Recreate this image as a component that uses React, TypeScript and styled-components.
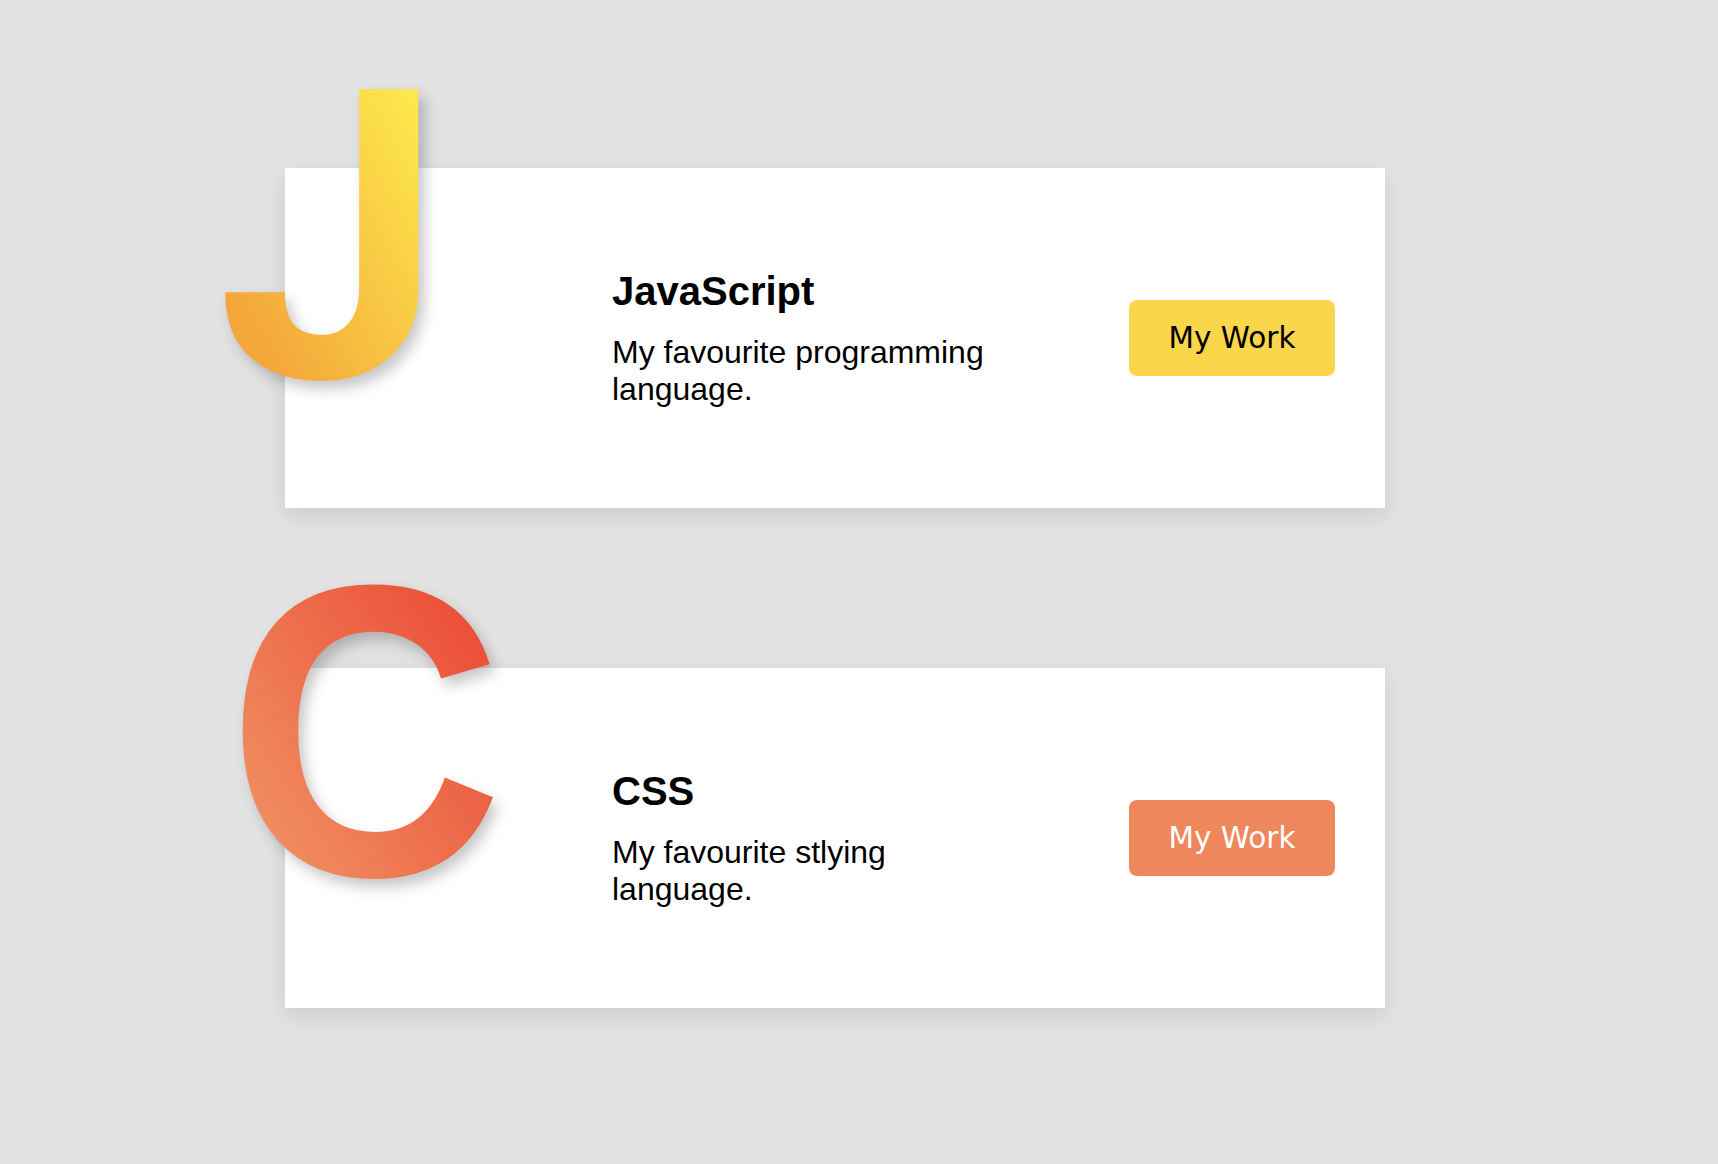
import React from "react";
import styled, { createGlobalStyle } from "styled-components";

const Global = createGlobalStyle`
  html, body { margin: 0; padding: 0; }
  body {
    background: #e2e2e2;
    font-family: "Liberation Sans", Arial, sans-serif;
  }
`;

const Page = styled.main`
  min-height: 1164px;
  box-sizing: border-box;
  padding: 168px 0 0 285px;
  display: flex;
  flex-direction: column;
  gap: 160px;
`;

const Card = styled.section`
  position: relative;
  width: 1100px;
  height: 340px;
  background: #ffffff;
  box-shadow: 0 8px 20px rgba(0, 0, 0, 0.09);
  display: flex;
  align-items: center;
  box-sizing: border-box;
  padding: 0 50px 0 327px;
`;

type LetterProps = {
  $from: string;
  $to: string;
  $font: string;
  $size: number;
  $left: number;
  $top: number;
  $scaleX: number;
};

const Letter = styled.span<LetterProps>`
  position: absolute;
  left: ${(p) => p.$left}px;
  top: ${(p) => p.$top}px;
  font-family: ${(p) => p.$font};
  font-weight: 700;
  font-size: ${(p) => p.$size}px;
  line-height: 1;
  transform: scaleX(${(p) => p.$scaleX});
  transform-origin: left top;
  background: linear-gradient(to top right, ${(p) => p.$from} 20%, ${(p) => p.$to} 85%);
  -webkit-background-clip: text;
  background-clip: text;
  color: transparent;
  filter: drop-shadow(6px 8px 7px rgba(0, 0, 0, 0.22));
  user-select: none;
`;

const Text = styled.div`
  flex: 1;
  max-width: 400px;
  padding-top: 1px;
`;

const Title = styled.h2`
  margin: 0 0 20px;
  font-size: 40px;
  font-weight: 700;
  color: #000;
`;

const Desc = styled.p`
  margin: 0;
  font-size: 32px;
  color: #000;
`;

const Button = styled.button<{ $bg: string; $fg: string }>`
  margin-left: auto;
  width: 206px;
  height: 76px;
  border: none;
  border-radius: 8px;
  background: ${(p) => p.$bg};
  color: ${(p) => p.$fg};
  font-family: "DejaVu Sans", "Open Sans", sans-serif;
  font-size: 29.5px;
  cursor: pointer;
`;

const items = [
  {
    letter: "J",
    font: 'Roboto, "Liberation Sans", sans-serif',
    size: 405,
    left: -68,
    top: -132,
    scaleX: 1,
    from: "#f3a63a",
    to: "#fde74c",
    title: "JavaScript",
    desc: "My favourite programming language.",
    bg: "#f9d64a",
    fg: "#000000",
  },
  {
    letter: "C",
    font: '"Liberation Sans", Arial, sans-serif',
    size: 416,
    left: -58,
    top: -145,
    scaleX: 0.92,
    from: "#f08c5f",
    to: "#eb4d36",
    title: "CSS",
    desc: "My favourite stlying language.",
    bg: "#ef875c",
    fg: "#ffffff",
  },
];

export default function App() {
  return (
    <>
      <Global />
      <Page>
        {items.map((it) => (
          <Card key={it.title}>
            <Letter
              $from={it.from}
              $to={it.to}
              $font={it.font}
              $size={it.size}
              $left={it.left}
              $top={it.top}
              $scaleX={it.scaleX}
            >
              {it.letter}
            </Letter>
            <Text>
              <Title>{it.title}</Title>
              <Desc>{it.desc}</Desc>
            </Text>
            <Button $bg={it.bg} $fg={it.fg}>
              My Work
            </Button>
          </Card>
        ))}
      </Page>
    </>
  );
}
